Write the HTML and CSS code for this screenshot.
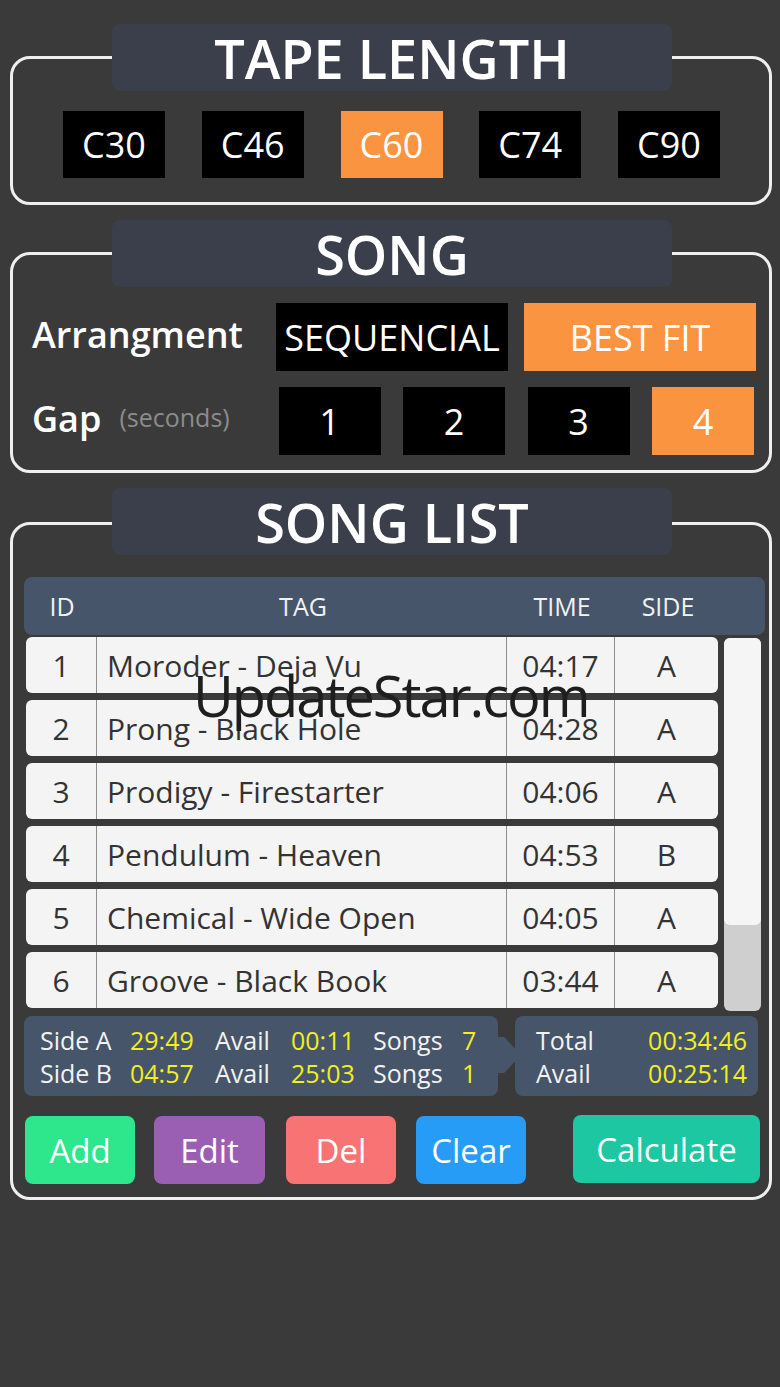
FILE: index.html
```html
<!DOCTYPE html>
<html lang="en">
<head>
<meta charset="utf-8">
<title>Tape Length Calculator</title>
<link rel="stylesheet" href="styles.css">
</head>
<body>
<div class="app">

  <section class="panel">
    <h1 class="tab">TAPE LENGTH</h1>
    <div class="frame frame-tape">
      <div class="tape-row">
        <div class="opt sq">C30</div>
        <div class="opt sq">C46</div>
        <div class="opt sq on">C60</div>
        <div class="opt sq">C74</div>
        <div class="opt sq">C90</div>
      </div>
    </div>
  </section>

  <section class="panel">
    <h1 class="tab">SONG</h1>
    <div class="frame frame-song">
      <div class="song-row">
        <span class="label">Arrangment</span>
        <div class="arr-opts">
          <div class="opt wide">SEQUENCIAL</div>
          <div class="opt wide on">BEST FIT</div>
        </div>
      </div>
      <div class="song-row gap-row">
        <span class="label">Gap<small>(seconds)</small></span>
        <div class="gap-opts">
          <div class="opt sq">1</div>
          <div class="opt sq">2</div>
          <div class="opt sq">3</div>
          <div class="opt sq on">4</div>
        </div>
      </div>
    </div>
  </section>

  <section class="panel">
    <h1 class="tab">SONG LIST</h1>
    <div class="frame frame-list">
      <div class="thead">
        <span>ID</span><span>TAG</span><span>TIME</span><span>SIDE</span>
      </div>
      <div class="tbody">
        <div class="rows">
          <div class="row"><span>1</span><span class="tag">Moroder - Deja Vu</span><span>04:17</span><span>A</span></div>
          <div class="row"><span>2</span><span class="tag">Prong - Black Hole</span><span>04:28</span><span>A</span></div>
          <div class="row"><span>3</span><span class="tag">Prodigy - Firestarter</span><span>04:06</span><span>A</span></div>
          <div class="row"><span>4</span><span class="tag">Pendulum - Heaven</span><span>04:53</span><span>B</span></div>
          <div class="row"><span>5</span><span class="tag">Chemical - Wide Open</span><span>04:05</span><span>A</span></div>
          <div class="row"><span>6</span><span class="tag">Groove - Black Book</span><span>03:44</span><span>A</span></div>
        </div>
        <div class="scroll"><div class="thumb"></div></div>
      </div>

      <div class="stats">
        <div class="side-box">
          <span>Side A</span><span class="y">29:49</span><span>Avail</span><span class="y">00:11</span><span>Songs</span><span class="y">7</span>
          <span>Side B</span><span class="y">04:57</span><span>Avail</span><span class="y">25:03</span><span>Songs</span><span class="y">1</span>
        </div>
        <div class="total-box">
          <span>Total</span><span class="y">00:34:46</span>
          <span>Avail</span><span class="y">00:25:14</span>
        </div>
      </div>

      <div class="actions">
        <div class="btn add">Add</div>
        <div class="btn edit">Edit</div>
        <div class="btn del">Del</div>
        <div class="btn clear">Clear</div>
        <div class="btn calc">Calculate</div>
      </div>
    </div>
  </section>

  <div class="watermark">UpdateStar.com</div>
</div>
</body>
</html>
```

FILE: styles.css
```css
* { box-sizing: border-box; }

body {
  margin: 0;
  background: #3a3a3a;
  color: #fff;
  font-family: "Open Sans", "Noto Sans", "Liberation Sans", sans-serif;
}

.app {
  position: relative;
  width: 780px;
  padding-top: 24px;
}

.panel + .panel { margin-top: 15px; }

/* section heading tab sitting on top of the frame outline */
.tab {
  position: relative;
  z-index: 1;
  margin: 0 0 0 112px;
  width: 560px;
  height: 67px;
  line-height: 69px;
  background: #3b3f4b;
  border-radius: 8px;
  font-size: 54px;
  font-weight: 600;
  text-align: center;
}

.frame {
  margin: -35px 8px 0 10px;
  border: 3px solid #efefef;
  border-radius: 20px;
}

/* option buttons */
.opt {
  display: flex;
  align-items: center;
  justify-content: center;
  background: #000;
  color: #fff;
  font-size: 36px;
  height: 67px;
}
.opt.sq { width: 102px; }
.opt.wide { width: 232px; height: 68px; }
.opt.on { background: #fb9440; }

/* tape length */
.frame-tape { padding: 52px 49px 24px 50px; }
.tape-row { display: flex; justify-content: space-between; }

/* song options */
.frame-song { padding: 48px 13px 15px 19px; }
.song-row { display: flex; align-items: center; }
.song-row + .song-row { margin-top: 16px; }
.gap-row { padding-right: 2px; }
.label {
  flex: 1;
  margin-top: -5px;
  font-size: 36px;
  font-weight: 600;
}
.label small {
  margin-left: 18px;
  vertical-align: 5px;
  font-size: 25px;
  font-weight: 400;
  color: #8c8c8c;
}
.arr-opts { display: flex; gap: 16px; }
.gap-opts { display: flex; gap: 22.5px; }
.gap-opts .opt { height: 68px; }

/* song list */
.frame-list {
  margin-top: -33px;
  padding: 52px 4px 13px 11px;
}

.thead {
  display: grid;
  grid-template-columns: 72px 410px 108px 104px;
  align-items: center;
  height: 58px;
  padding-left: 2px;
  background: #465569;
  border-radius: 8px;
  font-size: 25px;
  color: #f2f2f2;
}
.thead span { text-align: center; }

.tbody {
  display: flex;
  align-items: flex-start;
  margin-top: 2px;
}
.rows {
  display: flex;
  flex-direction: column;
  gap: 7px;
  width: 692px;
  margin-left: 2px;
}
.row {
  display: grid;
  grid-template-columns: 70px 410px 108px 104px;
  height: 56px;
  background: #f4f4f4;
  border-radius: 6px;
  color: #333;
  font-size: 30px;
}
.row span {
  display: flex;
  align-items: center;
  justify-content: center;
}
.row span + span { border-left: 1px solid #8e8e8e; }
.row .tag { justify-content: flex-start; padding-left: 10px; }

.scroll {
  width: 37px;
  height: 373px;
  margin: 1px 0 0 6px;
  background: #cfcfcf;
  border-radius: 6px;
}
.thumb {
  height: 287px;
  background: #f5f5f5;
  border-radius: 6px;
}

/* totals */
.stats {
  display: flex;
  gap: 17px;
  margin-top: 5px;
}
.side-box,
.total-box {
  position: relative;
  display: grid;
  grid-auto-rows: 33px;
  align-items: center;
  height: 80px;
  padding-top: 7px;
  background: #465569;
  border-radius: 8px;
  font-size: 25px;
  color: #f2f2f2;
}
.side-box {
  width: 474px;
  padding-left: 16px;
  grid-template-columns: 90px 85px 76px 82px 89px auto;
}
.side-box::after {
  content: "";
  position: absolute;
  top: 21px;
  right: -17px;
  width: 18px;
  height: 36px;
  background: #465569;
  clip-path: polygon(0 0, 40% 0, 100% 32%, 100% 68%, 40% 100%, 0 100%);
}
.total-box {
  width: 243px;
  padding: 7px 11px 0 21px;
  grid-template-columns: 1fr auto;
}
.y { color: #f2ef1c; }

/* action buttons */
.actions {
  display: flex;
  align-items: flex-start;
  margin-top: 20px;
}
.btn {
  display: flex;
  align-items: center;
  justify-content: center;
  width: 110px;
  height: 68px;
  border-radius: 8px;
  font-size: 33px;
  color: #fff;
}
.add   { margin-left: 1px;  background: #2ee68b; }
.edit  { margin-left: 19px; width: 111px; background: #9a5fb3; }
.del   { margin-left: 21px; background: #f87373; }
.clear { margin-left: 20px; background: #269cf7; }
.calc  { margin-left: 47px; margin-top: -1px; width: 187px; background: #1cc7a1; }

/* site stamp laid over the list */
.watermark {
  position: absolute;
  left: 193px;
  top: 657px;
  font-size: 56px;
  line-height: 76px;
  letter-spacing: -2px;
  color: #1e1e1e;
  white-space: nowrap;
}
```
